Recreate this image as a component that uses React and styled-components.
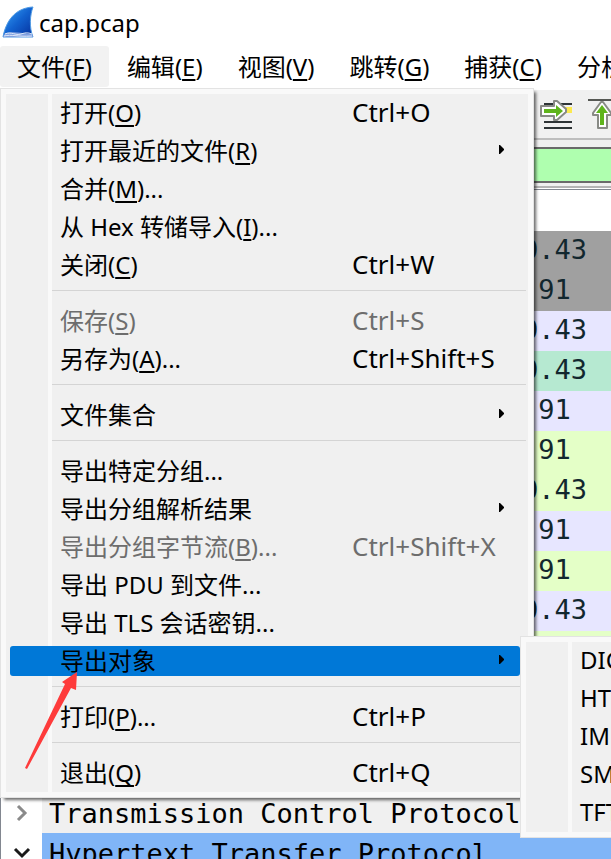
import React from 'react';
import styled, { createGlobalStyle, css } from 'styled-components';

const GlobalStyle = createGlobalStyle`
  * {
    box-sizing: border-box;
  }

  body {
    margin: 0;
    background: #ffffff;
    color: #000000;
    font-family: 'Noto Sans', 'Noto Sans CJK SC', sans-serif;
    font-size: 24px;
  }
`;

const Window = styled.div`
  display: flex;
  flex-direction: column;
  height: 100vh;
  overflow: hidden;
`;

const TitleBar = styled.header`
  display: flex;
  flex: none;
  align-items: center;
  gap: 4px;
  height: 46px;
  padding-left: 2px;
`;

const Title = styled.h1`
  margin: 0;
  font-size: 24px;
  font-weight: 400;
  line-height: 32px;
`;

const MenuBar = styled.nav`
  position: relative;
  z-index: 1;
  display: flex;
  flex: none;
  gap: 1px;
  height: 44px;
`;

const MenuButton = styled.button`
  flex: none;
  height: 41px;
  padding: 0 17px;
  border: 0;
  border-radius: 3px;
  background: ${(props) => (props.$open ? '#f2f2f2' : 'transparent')};
  color: inherit;
  font: inherit;
  line-height: 40px;
  white-space: nowrap;
`;

const Key = styled.span`
  text-decoration: underline;
  text-decoration-thickness: 2px;
  text-underline-offset: 3px;
  text-decoration-skip-ink: none;
`;

const menuFrame = css`
  position: absolute;
  border: 1px solid #e3e3e3;
  padding: 5px;
  background: #f9f9f9;
`;

const FileMenu = styled.div`
  ${menuFrame}
  top: 42px;
  left: 0;
  width: 534px;
  box-shadow: 3px 3px 3px -1px rgba(0, 0, 0, 0.6);
`;

const SubMenu = styled.div`
  ${menuFrame}
  top: 547px;
  left: 519px;
  width: 240px;
`;

const MenuBody = styled.div`
  background: linear-gradient(
    to right,
    #f0f0f0 42px,
    #f9f9f9 42px,
    #f9f9f9 46px,
    #f0f0f0 46px
  );
`;

const Item = styled.button`
  display: flex;
  align-items: center;
  width: 100%;
  height: 38px;
  padding: 0 8px 0 4px;
  border: 0;
  background: transparent;
  color: ${(props) => (props.disabled ? '#6d6d6d' : '#000000')};
  font: inherit;
  text-align: left;
  white-space: nowrap;
`;

const ItemFace = styled.span`
  display: flex;
  align-items: center;
  width: 100%;
  height: 30px;
  padding: 0 16px 3px 50px;
  border-radius: 3px;
  background: ${(props) => (props.$active ? '#0078d7' : 'transparent')};
`;

const Label = styled.span`
  flex: none;
  width: 292px;
`;

const Shortcut = styled.span`
  flex: 1;
  font-size: 26px;
`;

const Arrow = styled.svg`
  flex: none;
`;

const Separator = styled.hr`
  height: 18px;
  margin: 0 2px 0 46px;
  border: 0;
  border-top: 6px solid transparent;
  border-bottom: 11px solid transparent;
  background: #d4d4d4;
  background-clip: content-box;
`;

const ToolBar = styled.div`
  display: flex;
  flex: none;
  gap: 14px;
  height: 50px;
  padding: 6px 0 0 538px;
  border-bottom: 2px solid #bdbdbd;
  background: #f0f0f0;
`;

const ToolButton = styled.button`
  flex: none;
  width: 36px;
  height: 36px;
  padding: 0;
  border: 0;
  background: transparent;
`;

const FilterBar = styled.div`
  flex: none;
  height: 48px;
  padding-top: 7px;
  border-bottom: 2px solid #b4b4b4;
  background: #f0f0f0;
`;

const FilterInput = styled.input`
  display: block;
  width: 100%;
  height: 36px;
  border: 2px solid #6a6a6a;
  border-width: 2px 0;
  background: #afffaf;
`;

const PacketPane = styled.div`
  flex: none;
  margin-top: 1px;
  padding-top: 41px;
  border-top: 1px solid #828790;
`;

const PacketTable = styled.table`
  width: 100%;
  table-layout: fixed;
  border-collapse: collapse;
  color: #12272e;
  font-family: 'DejaVu Sans Mono', monospace;
  font-size: 27px;
`;

const tones = {
  gray: '#a0a0a0',
  tcp: '#e7e6ff',
  green: '#b6e9d1',
  http: '#e4ffc7',
};

const Packet = styled.tr`
  height: 40px;
  background: ${(props) => tones[props.$tone]};
`;

const Cell = styled.td`
  width: ${(props) => (props.$source ? '522px' : 'auto')};
  padding: 0 0 2px;
  line-height: 36px;
  white-space: nowrap;
`;

const Details = styled.div`
  flex: none;
  margin-top: 2px;
  border-left: 1px solid #828790;
  font-family: 'DejaVu Sans Mono', monospace;
  font-size: 27px;
`;

const DetailRow = styled.div`
  display: flex;
  align-items: center;
  height: 40px;
`;

const Toggle = styled.button`
  display: flex;
  flex: none;
  align-items: center;
  justify-content: center;
  width: 41px;
  height: 40px;
  padding: 0;
  border: 0;
  background: #ffffff;
`;

const DetailText = styled.span`
  flex: 1;
  height: 40px;
  padding-left: 7px;
  background: ${(props) => (props.$selected ? '#80b5f7' : '#f0f0f0')};
  line-height: 42px;
  white-space: nowrap;
`;

const Pointer = styled.svg`
  position: absolute;
  z-index: 2;
  top: 672px;
  left: 24px;
  pointer-events: none;
`;

const menus = [
  ['文件', 'F'],
  ['编辑', 'E'],
  ['视图', 'V'],
  ['跳转', 'G'],
  ['捕获', 'C'],
  ['分析', 'A'],
];

const fileItems = [
  { text: '打开', mnemonic: 'O', shortcut: 'Ctrl+O' },
  { text: '打开最近的文件', mnemonic: 'R', sub: true },
  { text: '合并', mnemonic: 'M', dots: true },
  { text: '从 Hex 转储导入', mnemonic: 'I', dots: true },
  { text: '关闭', mnemonic: 'C', shortcut: 'Ctrl+W' },
  null,
  { text: '保存', mnemonic: 'S', shortcut: 'Ctrl+S', disabled: true },
  { text: '另存为', mnemonic: 'A', dots: true, shortcut: 'Ctrl+Shift+S' },
  null,
  { text: '文件集合', sub: true },
  null,
  { text: '导出特定分组', dots: true },
  { text: '导出分组解析结果', sub: true },
  {
    text: '导出分组字节流',
    mnemonic: 'B',
    dots: true,
    shortcut: 'Ctrl+Shift+X',
    disabled: true,
  },
  { text: '导出 PDU 到文件', dots: true },
  { text: '导出 TLS 会话密钥', dots: true },
  { text: '导出对象', sub: true, active: true },
  null,
  { text: '打印', mnemonic: 'P', dots: true, shortcut: 'Ctrl+P' },
  null,
  { text: '退出', mnemonic: 'Q', shortcut: 'Ctrl+Q' },
];

const exportItems = ['DICOM...', 'HTTP...', 'IMF...', 'SMB...', 'TFTP...'];

const packets = [
  ['gray', '0.43'],
  ['gray', '.91'],
  ['tcp', '0.43'],
  ['green', '0.43'],
  ['tcp', '.91'],
  ['http', '.91'],
  ['http', '0.43'],
  ['tcp', '.91'],
  ['http', '.91'],
  ['tcp', '0.43'],
  ['http', ''],
  ['http', ''],
  ['http', ''],
  ['http', ''],
];

function Mnemonic({ letter }) {
  return (
    <>
      (<Key>{letter}</Key>)
    </>
  );
}

function MenuItem({ item }) {
  return (
    <Item disabled={item.disabled}>
      <ItemFace $active={item.active}>
        <Label>
          {item.text}
          {item.mnemonic && <Mnemonic letter={item.mnemonic} />}
          {item.dots && '...'}
        </Label>
        <Shortcut>{item.shortcut}</Shortcut>
        {item.sub && (
          <Arrow width="5" height="9" viewBox="0 0 5 9">
            <path d="M0 0h1l4 4v1l-4 4H0z" />
          </Arrow>
        )}
      </ItemFace>
    </Item>
  );
}

function FinLogo() {
  return (
    <svg width="33" height="34" viewBox="0 0 33 34">
      <defs>
        <linearGradient id="fin" x1="0" y1="0" x2="1" y2="1">
          <stop offset="0.2" stopColor="#2a8be8" />
          <stop offset="0.5" stopColor="#1262cf" />
          <stop offset="1" stopColor="#052f9c" />
        </linearGradient>
      </defs>
      <path
        d="M1 31C4 15 13 2 31 1c-3 8-4 20 0 30z"
        fill="url(#fin)"
        stroke="#4f9ae4"
      />
      <path d="M1 31l2-4c9-2 18 0 27 1l1 3z" fill="#7f9fdf" />
      <path
        d="M3 28c7-3 10 2 16 0s8-1 11 0M2 30c8-2 12 1 28 0"
        fill="none"
        stroke="#dfe9fa"
      />
    </svg>
  );
}

export default function App() {
  return (
    <>
      <GlobalStyle />
      <Window>
        <TitleBar>
          <FinLogo />
          <Title>cap.pcap</Title>
        </TitleBar>
        <MenuBar>
          {menus.map(([text, letter], i) => (
            <MenuButton key={text} $open={i === 0}>
              {text}
              <Mnemonic letter={letter} />
            </MenuButton>
          ))}
          <FileMenu>
            <MenuBody>
              {fileItems.map((item, i) =>
                item ? <MenuItem key={i} item={item} /> : <Separator key={i} />
              )}
            </MenuBody>
            <SubMenu>
              <MenuBody>
                {exportItems.map((text) => (
                  <MenuItem key={text} item={{ text }} />
                ))}
              </MenuBody>
            </SubMenu>
          </FileMenu>
        </MenuBar>
        <ToolBar>
          <ToolButton aria-label="Go to packet">
            <svg width="36" height="36" viewBox="0 0 36 36">
              <path d="M6 8h28M6 14h28M6 26h28M6 32h28" stroke="#2e3436" strokeWidth="2" />
              <path d="M22 11h12v6H22z" fill="#fce94f" />
              <path
                d="M3 10h13V5h3l9 8v3l-9 8h-3v-4H3z"
                fill="#ffffff"
                stroke="#888a85"
                strokeWidth="2"
                strokeLinejoin="round"
              />
              <path d="M6 13h12v-4l7 6-7 6v-4H6z" fill="#5fb41c" />
            </svg>
          </ToolButton>
          <ToolButton aria-label="First packet">
            <svg width="36" height="36" viewBox="0 0 36 36">
              <path d="M0 4h28" stroke="#555753" strokeWidth="2" />
              <path
                d="M13 6h2l8 11v2h-4v13h-9V19H5v-2z"
                fill="#ffffff"
                stroke="#888a85"
                strokeWidth="2"
                strokeLinejoin="round"
              />
              <path d="M14 9l6 8h-4v12h-4V17H8z" fill="#5fb41c" />
            </svg>
          </ToolButton>
        </ToolBar>
        <FilterBar>
          <FilterInput aria-label="Display filter" />
        </FilterBar>
        <PacketPane>
          <PacketTable>
            <tbody>
              {packets.map(([tone, address], i) => (
                <Packet key={i} $tone={tone}>
                  <Cell $source />
                  <Cell>{address}</Cell>
                </Packet>
              ))}
            </tbody>
          </PacketTable>
        </PacketPane>
        <Details>
          <DetailRow>
            <Toggle aria-label="Expand">
              <svg width="12" height="18" viewBox="0 0 12 18">
                <path d="M2 2l7 7-7 7" fill="none" stroke="#8a8a8a" strokeWidth="3" />
              </svg>
            </Toggle>
            <DetailText>Transmission Control Protocol</DetailText>
          </DetailRow>
          <DetailRow>
            <Toggle aria-label="Collapse">
              <svg width="18" height="12" viewBox="0 0 18 12">
                <path d="M2 2l7 7 7-7" fill="none" stroke="#1a1a1a" strokeWidth="3" />
              </svg>
            </Toggle>
            <DetailText $selected>Hypertext Transfer Protocol</DetailText>
          </DetailRow>
        </Details>
      </Window>
      <Pointer width="56" height="100" viewBox="0 0 56 100">
        <path d="M1 96L41 12l-3-2L53 0l-1 18-5-2L3 97z" fill="#fe3b3b" />
      </Pointer>
    </>
  );
}
